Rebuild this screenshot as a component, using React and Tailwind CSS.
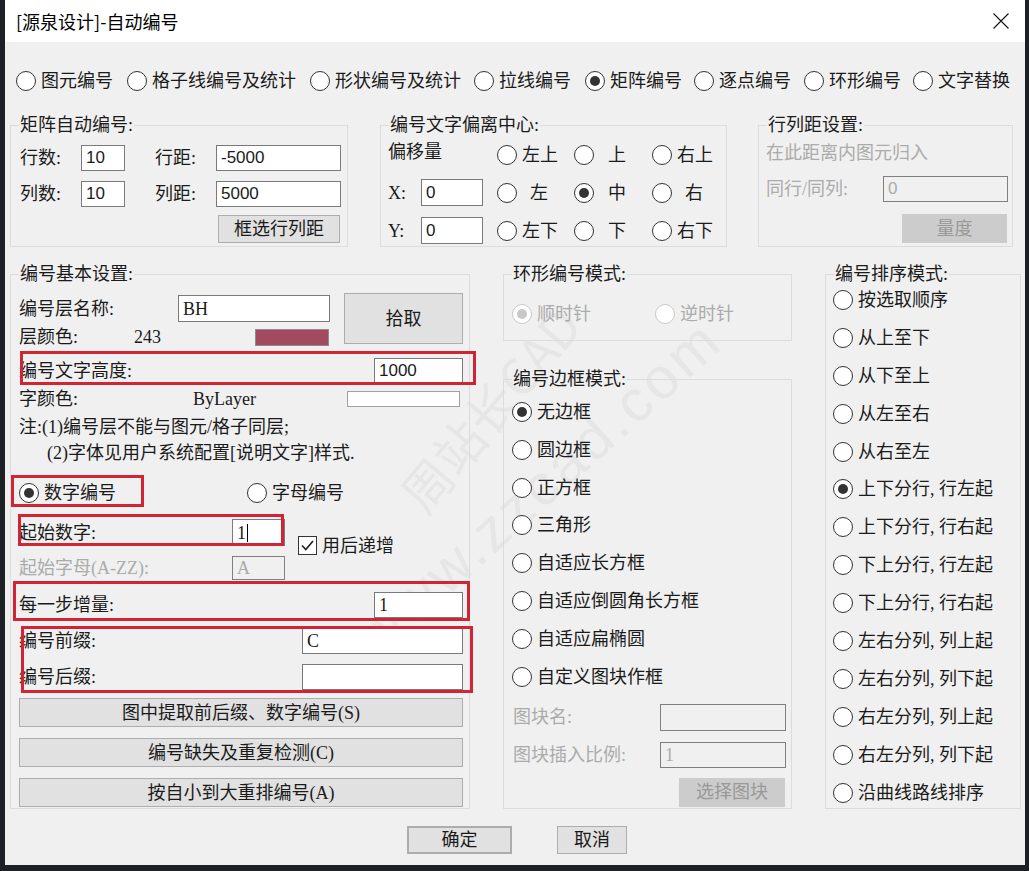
import React from 'react'

// 单选按钮 (Windows 样式)
const Radio = ({ label, checked = false, disabled = false, gap = 'ml-[5px]', textClass = '' }) => (
  <div className="flex items-center h-[24px] shrink-0">
    <span className={`w-[20px] h-[20px] rounded-full border bg-white flex items-center justify-center shrink-0 ${disabled ? 'border-[#c8c8c8]' : 'border-[#333333]'}`}>
      {checked && <span className={`w-[10px] h-[10px] rounded-full ${disabled ? 'bg-[#c8c8c8]' : 'bg-[#333333]'}`} />}
    </span>
    <span className={`${gap} whitespace-nowrap ${disabled ? 'text-[#ababab]' : ''} ${textClass}`}>{label}</span>
  </div>
)

const Group = ({ title, className = '', children }) => (
  <fieldset className={`border border-[#dcdcdc] shrink-0 ${className}`}>
    <legend className="ml-[8px] px-[1px] leading-[24px]">{title}</legend>
    {children}
  </fieldset>
)

const Field = ({ className = '', value = '', disabled = false, caret = false }) => (
  <div className={`border flex items-center px-[4px] shrink-0 whitespace-nowrap ${disabled ? 'bg-[#f0f0f0] border-[#7f7f7f] text-[#ababab]' : 'bg-white border-[#7a7a7a]'} ${className}`}>
    {value}
    {caret && <span className="w-px h-[18px] bg-black ml-[1px]" />}
  </div>
)

const Btn = ({ children, className = '', disabled = false }) => (
  <div className={`border flex items-center justify-center shrink-0 whitespace-nowrap ${disabled ? 'bg-[#cccccc] border-[#cccccc] text-[#999999]' : 'bg-[#e1e1e1] border-[#adadad]'} ${className}`}>
    {children}
  </div>
)

const modes = [
  { label: '图元编号', w: 'w-[111px]' },
  { label: '格子线编号及统计', w: 'w-[183px]' },
  { label: '形状编号及统计', w: 'w-[164px]' },
  { label: '拉线编号', w: 'w-[111px]' },
  { label: '矩阵编号', w: 'w-[109px]', checked: true },
  { label: '逐点编号', w: 'w-[110px]' },
  { label: '环形编号', w: 'w-[109px]' },
  { label: '文字替换', w: '' },
]

const frames = ['无边框', '圆边框', '正方框', '三角形', '自适应长方框', '自适应倒圆角长方框', '自适应扁椭圆', '自定义图块作框']

const orders = [
  '按选取顺序', '从上至下', '从下至上', '从左至右', '从右至左',
  '上下分行, 行左起', '上下分行, 行右起', '下上分行, 行左起', '下上分行, 行右起',
  '左右分列, 列上起', '左右分列, 列下起', '右左分列, 列上起', '右左分列, 列下起', '沿曲线路线排序',
]

const App = () => {
  return (
    <div className="w-[1029px] h-[871px] bg-[#1d2125] pl-[5px] overflow-hidden">
      <div className="relative w-[1020px] h-[865px] bg-[#f0f0f0] flex flex-col font-['Liberation_Serif','Noto_Sans_CJK_SC',serif] text-[18px] leading-[24px] text-[#1b1b1b] overflow-hidden">

        {/* ===== Title bar ===== */}
        <div className="h-[42px] bg-white flex items-center justify-between pl-[11px] pr-[16px] shrink-0">
          <span className="font-['Noto_Sans_CJK_SC',sans-serif] text-[18px] text-black">[源泉设计]-自动编号</span>
          <svg width="16" height="16" viewBox="0 0 16 16">
            <path d="M0.5 0.5 L15.5 15.5 M15.5 0.5 L0.5 15.5" stroke="#111" strokeWidth="1.1" fill="none" />
          </svg>
        </div>

        {/* ===== 水印 (behind controls) ===== */}
        <span className="absolute left-[360px] top-[380px] -rotate-[50deg] text-[50px] leading-[56px] text-[#e6e6e6] whitespace-nowrap pointer-events-none font-['Noto_Sans_CJK_SC',sans-serif]">周站长CAD</span>
        <span className="absolute left-[300px] top-[455px] -rotate-[42deg] text-[58px] leading-[64px] tracking-[4px] text-[#e6e6e6] whitespace-nowrap pointer-events-none font-['Liberation_Sans',sans-serif]">www.zzcad.com</span>

        <div className="relative flex flex-col pl-[5px]">

          {/* ===== 编号类型 ===== */}
          <div className="flex mt-[27px] pl-[6px] h-[24px]">
            {modes.map(m => (
              <div key={m.label} className={`${m.w} shrink-0`}>
                <Radio label={m.label} checked={m.checked} />
              </div>
            ))}
          </div>

          {/* ===== Row 2 ===== */}
          <div className="flex mt-[20px]">
            <Group title="矩阵自动编号:" className="w-[338px] h-[134px]">
              <div className="flex flex-col pl-[9px] pt-[8px]">
                <div className="flex items-center h-[26px]">
                  <span className="w-[61px]">行数:</span>
                  <Field className="w-[44px] h-[26px] font-['Liberation_Sans',sans-serif] text-[17px]" value="10" />
                  <span className="ml-[30px] w-[61px]">行距:</span>
                  <Field className="w-[125px] h-[26px] font-['Liberation_Sans',sans-serif] text-[17px]" value="-5000" />
                </div>
                <div className="flex items-center h-[26px] mt-[10px]">
                  <span className="w-[61px]">列数:</span>
                  <Field className="w-[44px] h-[26px] font-['Liberation_Sans',sans-serif] text-[17px]" value="10" />
                  <span className="ml-[30px] w-[61px]">列距:</span>
                  <Field className="w-[125px] h-[26px] font-['Liberation_Sans',sans-serif] text-[17px]" value="5000" />
                </div>
                <Btn className="ml-[198px] mt-[8px] w-[122px] h-[28px]">框选行列距</Btn>
              </div>
            </Group>

            <Group title="编号文字偏离中心:" className="ml-[32px] w-[347px] h-[134px]">
              <div className="flex flex-col pl-[7px] pt-[4px] gap-[11px]">
                <div className="flex items-center h-[27px]">
                  <span className="w-[109px] self-start leading-[22px]">偏移量</span>
                  <div className="w-[77px]"><Radio label="左上" /></div>
                  <div className="w-[78px]"><Radio label="上" gap="ml-[14px]" /></div>
                  <div><Radio label="右上" /></div>
                </div>
                <div className="flex items-center h-[27px]">
                  <span className="w-[33px]">X:</span>
                  <Field className="w-[62px] h-[27px] font-['Liberation_Sans',sans-serif] text-[17px]" value="0" />
                  <span className="w-[14px]" />
                  <div className="w-[77px]"><Radio label="左" gap="ml-[13px]" /></div>
                  <div className="w-[78px]"><Radio label="中" checked gap="ml-[14px]" /></div>
                  <div><Radio label="右" gap="ml-[13px]" /></div>
                </div>
                <div className="flex items-center h-[27px]">
                  <span className="w-[33px]">Y:</span>
                  <Field className="w-[62px] h-[27px] font-['Liberation_Sans',sans-serif] text-[17px]" value="0" />
                  <span className="w-[14px]" />
                  <div className="w-[77px]"><Radio label="左下" /></div>
                  <div className="w-[78px]"><Radio label="下" gap="ml-[14px]" /></div>
                  <div><Radio label="右下" /></div>
                </div>
              </div>
            </Group>

            <Group title="行列距设置:" className="ml-[31px] w-[255px] h-[134px]">
              <div className="flex flex-col pl-[7px] pt-[4px]">
                <span className="h-[24px] text-[#ababab]">在此距离内图元归入</span>
                <div className="flex items-center h-[26px] mt-[11px]">
                  <span className="w-[117px] text-[#ababab]">同行/同列:</span>
                  <Field className="w-[125px] h-[26px] font-['Liberation_Sans',sans-serif] text-[17px]" value="0" disabled />
                </div>
                <Btn className="ml-[136px] mt-[12px] w-[105px] h-[29px]" disabled>量度</Btn>
              </div>
            </Group>
          </div>

          {/* ===== Row 3 ===== */}
          <div className="flex mt-[15px]">
            <Group title="编号基本设置:" className="w-[460px] h-[547px]">
              <div className="flex flex-col pl-[8px] pr-[6px]">
                <div className="flex mt-[7px]">
                  <div className="w-[311px] flex flex-col">
                    <div className="flex items-center h-[27px] mt-[2px]">
                      <span className="w-[159px]">编号层名称:</span>
                      <Field className="w-[152px] h-[27px]" value="BH" />
                    </div>
                    <div className="flex items-center h-[24px] mt-[3px]">
                      <span className="w-[115px]">层颜色:</span>
                      <span className="w-[121px]">243</span>
                      <span className="w-[74px] h-[17px] bg-[#a44a60] border border-[#8c8c8c]" />
                    </div>
                  </div>
                  <Btn className="ml-[14px] w-[119px] h-[51px]">拾取</Btn>
                </div>

                <div className="flex items-center h-[26px] mt-[9px]">
                  <span className="flex-1">编号文字高度:</span>
                  <Field className="w-[89px] h-[26px] font-['Liberation_Sans',sans-serif] text-[17px]" value="1000" />
                </div>

                <div className="flex items-center h-[24px] mt-[3px]">
                  <span className="w-[174px]">字颜色:</span>
                  <span className="w-[154px]">ByLayer</span>
                  <span className="w-[113px] h-[16px] bg-white border border-[#a0a0a0]" />
                </div>

                <div className="h-[24px] mt-[4px] whitespace-nowrap">注:(1)编号层不能与图元/格子同层;</div>
                <div className="h-[24px] mt-[2px] pl-[28px] whitespace-nowrap">(2)字体见用户系统配置[说明文字]样式.</div>

                <div className="flex h-[24px] mt-[16px]">
                  <div className="w-[228px]"><Radio label="数字编号" checked /></div>
                  <Radio label="字母编号" />
                </div>

                <div className="flex items-start mt-[14px]">
                  <span className="w-[213px] h-[27px] flex items-center">起始数字:</span>
                  <Field className="w-[53px] h-[27px]" value="1" caret />
                  <div className="flex items-center h-[19px] ml-[13px] mt-[17px]">
                    <span className="w-[19px] h-[19px] border border-[#333333] bg-white flex items-center justify-center">
                      <svg width="15" height="15" viewBox="0 0 15 15">
                        <path d="M2 7.5 L5.8 11.5 L13 3" stroke="#222" strokeWidth="1.6" fill="none" />
                      </svg>
                    </span>
                    <span className="ml-[5px] whitespace-nowrap">用后递增</span>
                  </div>
                </div>

                <div className="flex items-center h-[24px] mt-[1px]">
                  <span className="w-[213px] text-[#ababab]">起始字母(A-ZZ):</span>
                  <Field className="w-[53px] h-[24px]" value="A" disabled />
                </div>

                <div className="flex items-center h-[26px] mt-[12px]">
                  <span className="flex-1">每一步增量:</span>
                  <Field className="w-[89px] h-[26px]" value="1" />
                </div>

                <div className="flex items-center h-[26px] mt-[10px]">
                  <span className="flex-1">编号前缀:</span>
                  <Field className="w-[161px] h-[26px]" value="C" />
                </div>
                <div className="flex items-center h-[26px] mt-[10px]">
                  <span className="flex-1">编号后缀:</span>
                  <Field className="w-[161px] h-[26px]" value="" />
                </div>

                <Btn className="mt-[8px] h-[29px]">图中提取前后缀、数字编号(S)</Btn>
                <Btn className="mt-[11px] h-[29px]">编号缺失及重复检测(C)</Btn>
                <Btn className="mt-[11px] h-[29px]">按自小到大重排编号(A)</Btn>
              </div>
            </Group>

            <div className="flex flex-col ml-[33px] w-[289px]">
              <Group title="环形编号模式:" className="w-[289px] h-[79px]">
                <div className="flex pl-[8px] mt-[16px]">
                  <div className="w-[143px]"><Radio label="顺时针" checked disabled /></div>
                  <Radio label="逆时针" disabled />
                </div>
              </Group>

              <Group title="编号边框模式:" className="mt-[26px] w-[289px] h-[442px]">
                <div className="flex flex-col pl-[8px]">
                  <div className="flex flex-col mt-[9px] gap-[13.8px]">
                    {frames.map((f, i) => <Radio key={f} label={f} checked={i === 0} />)}
                  </div>
                  <div className="flex items-center h-[27px] mt-[15px]">
                    <span className="w-[148px] pl-[1px] text-[#ababab]">图块名:</span>
                    <Field className="w-[126px] h-[27px]" value="" disabled />
                  </div>
                  <div className="flex items-center h-[26px] mt-[11px]">
                    <span className="w-[148px] pl-[1px] text-[#ababab]">图块插入比例:</span>
                    <Field className="w-[126px] h-[26px]" value="1" disabled />
                  </div>
                  <Btn className="ml-[167px] mt-[10px] w-[106px] h-[29px]" disabled>选择图块</Btn>
                </div>
              </Group>
            </div>

            <Group title="编号排序模式:" className="ml-[33px] w-[196px] h-[547px]">
              <div className="flex flex-col pl-[7px] mt-[2px] gap-[13.9px]">
                {orders.map((o, i) => <Radio key={o} label={o} checked={i === 5} />)}
              </div>
            </Group>
          </div>

          {/* ===== 确定 / 取消 ===== */}
          <div className="flex mt-[17px]">
            <Btn className="ml-[397px] w-[105px] h-[28px] border-2 border-[#2870b8]">确定</Btn>
            <Btn className="ml-[45px] w-[70px] h-[28px]">取消</Btn>
          </div>
        </div>

        {/* ===== 标注红框 ===== */}
        <div className="absolute left-[15px] top-[351px] w-[456px] h-[34px] border-[3px] border-[#cf2535] pointer-events-none" />
        <div className="absolute left-[6px] top-[475px] w-[133px] h-[32px] border-[3px] border-[#cf2535] pointer-events-none" />
        <div className="absolute left-[13px] top-[514px] w-[266px] h-[32px] border-[3px] border-[#cf2535] pointer-events-none" />
        <div className="absolute left-[8px] top-[581px] w-[457px] h-[40px] border-[3px] border-[#cf2535] pointer-events-none" />
        <div className="absolute left-[16px] top-[626px] w-[452px] h-[67px] border-[3px] border-[#cf2535] pointer-events-none" />
      </div>
    </div>
  )
}

export default App
